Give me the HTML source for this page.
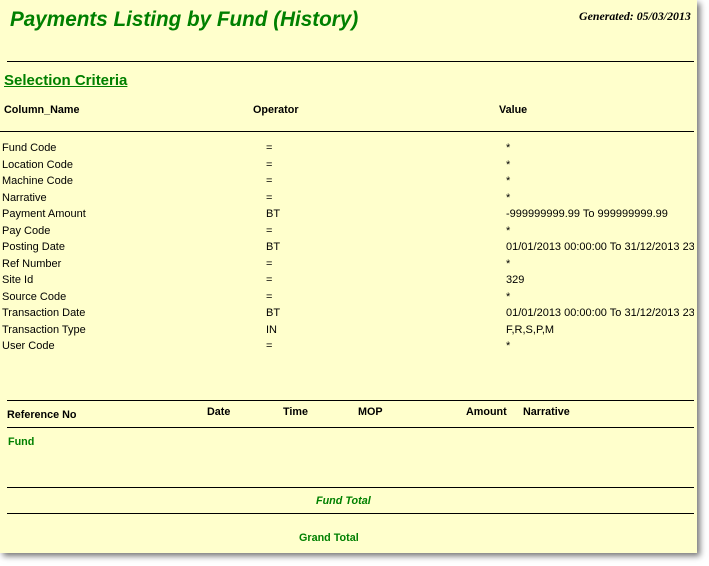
<!DOCTYPE html>
<html><head><style>
body{margin:0;width:709px;height:566px;background:#fff;position:relative;overflow:hidden;font-family:"Liberation Sans",Arial,sans-serif}
#pg{position:absolute;left:0;top:0;width:697px;height:553px;background:#ffffcc;box-shadow:3px 3px 6px rgba(0,0,0,.55);overflow:hidden}
.t{position:absolute;white-space:nowrap;font-size:11px;color:#000;line-height:13px}
.b{font-weight:bold;transform:scaleX(.98);transform-origin:left}
.g{color:#008000}
.ln{position:absolute;height:1px;background:#000}
</style></head><body><div id="pg">
<div class="t g" style="left:10px;top:7px;font-size:21px;line-height:26px;font-weight:bold;font-style:italic;transform:scaleX(.985);transform-origin:left">Payments Listing by Fund (History)</div>
<div class="t" style="left:579px;top:10px;font-family:'Liberation Serif',serif;font-weight:bold;font-style:italic;font-size:12px;transform:scaleX(.99);transform-origin:left">Generated: 05/03/2013</div>
<div class="ln" style="left:7px;top:61px;width:687px"></div>
<div class="t g" style="left:4px;top:72px;font-size:15px;line-height:18px;font-weight:bold;text-decoration:underline">Selection Criteria</div>
<div class="t b" style="left:4px;top:104px">Column_Name</div>
<div class="t b" style="left:253px;top:104px">Operator</div>
<div class="t b" style="left:499px;top:104px">Value</div>
<div class="ln" style="left:0;top:131px;width:694px"></div>

<div style="position:absolute;left:0;top:142px;width:694px;overflow:hidden;height:220px">
<div class="t" style="left:2px;top:0">Fund Code</div><div class="t" style="left:266px;top:0">=</div><div class="t" style="left:506px;top:0">*</div>
<div class="t" style="left:2px;top:16.5px">Location Code</div><div class="t" style="left:266px;top:16.5px">=</div><div class="t" style="left:506px;top:16.5px">*</div>
<div class="t" style="left:2px;top:33px">Machine Code</div><div class="t" style="left:266px;top:33px">=</div><div class="t" style="left:506px;top:33px">*</div>
<div class="t" style="left:2px;top:49.5px">Narrative</div><div class="t" style="left:266px;top:49.5px">=</div><div class="t" style="left:506px;top:49.5px">*</div>
<div class="t" style="left:2px;top:66px">Payment Amount</div><div class="t" style="left:266px;top:66px">BT</div><div class="t" style="left:506px;top:66px">-999999999.99 To 999999999.99</div>
<div class="t" style="left:2px;top:82.5px">Pay Code</div><div class="t" style="left:266px;top:82.5px">=</div><div class="t" style="left:506px;top:82.5px">*</div>
<div class="t" style="left:2px;top:99px">Posting Date</div><div class="t" style="left:266px;top:99px">BT</div><div class="t" style="left:506px;top:99px">01/01/2013 00:00:00 To 31/12/2013 23:59:59</div>
<div class="t" style="left:2px;top:115.5px">Ref Number</div><div class="t" style="left:266px;top:115.5px">=</div><div class="t" style="left:506px;top:115.5px">*</div>
<div class="t" style="left:2px;top:132px">Site Id</div><div class="t" style="left:266px;top:132px">=</div><div class="t" style="left:506px;top:132px">329</div>
<div class="t" style="left:2px;top:148.5px">Source Code</div><div class="t" style="left:266px;top:148.5px">=</div><div class="t" style="left:506px;top:148.5px">*</div>
<div class="t" style="left:2px;top:165px">Transaction Date</div><div class="t" style="left:266px;top:165px">BT</div><div class="t" style="left:506px;top:165px">01/01/2013 00:00:00 To 31/12/2013 23:59:59</div>
<div class="t" style="left:2px;top:181.5px">Transaction Type</div><div class="t" style="left:266px;top:181.5px">IN</div><div class="t" style="left:506px;top:181.5px">F,R,S,P,M</div>
<div class="t" style="left:2px;top:198px">User Code</div><div class="t" style="left:266px;top:198px">=</div><div class="t" style="left:506px;top:198px">*</div>
</div>

<div class="ln" style="left:7px;top:400px;width:687px"></div>
<div class="t b" style="left:7px;top:409px">Reference No</div>
<div class="t b" style="left:207px;top:406px">Date</div>
<div class="t b" style="left:283px;top:406px">Time</div>
<div class="t b" style="left:358px;top:406px">MOP</div>
<div class="t b" style="left:466px;top:406px">Amount</div>
<div class="t b" style="left:523px;top:406px">Narrative</div>
<div class="ln" style="left:7px;top:427px;width:687px"></div>
<div class="t g b" style="left:8px;top:436px">Fund</div>
<div class="ln" style="left:7px;top:487px;width:687px"></div>
<div class="t g b" style="left:316px;top:495px;font-style:italic">Fund Total</div>
<div class="ln" style="left:7px;top:513px;width:687px"></div>
<div class="t g b" style="left:299px;top:532px">Grand Total</div>
</div></body></html>
